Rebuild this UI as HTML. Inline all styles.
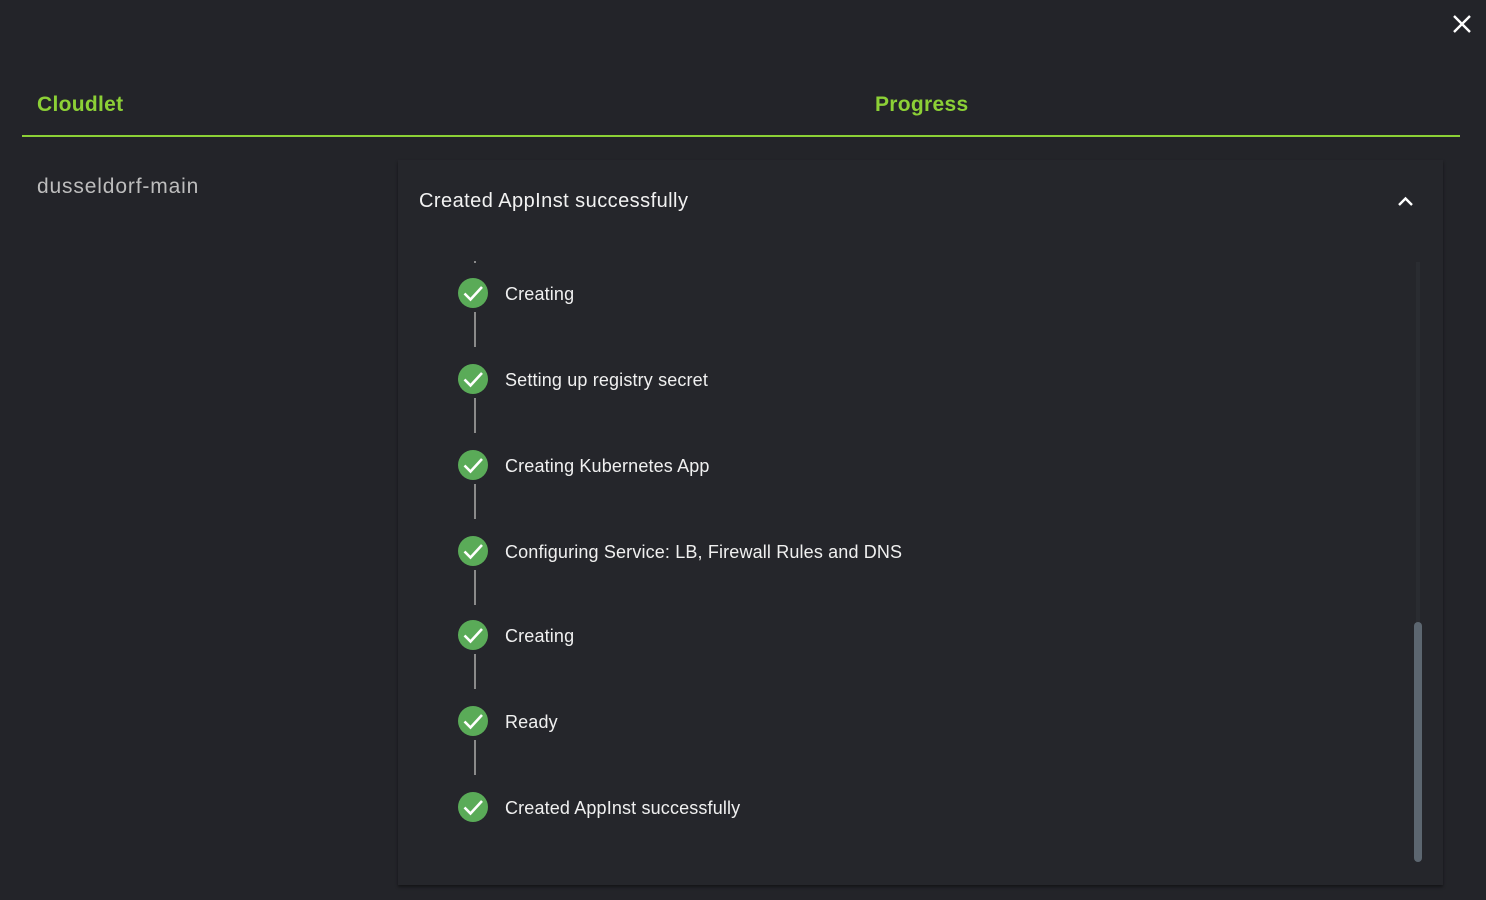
<!DOCTYPE html>
<html><head><style>
html,body{margin:0;padding:0;width:1486px;height:900px;overflow:hidden;background:#232429;font-family:"Liberation Sans",sans-serif;}
.abs{position:absolute}
.h{color:#8cd036;font-size:21px;font-weight:bold;top:93px;letter-spacing:0.3px}
.step{position:absolute;left:458px;width:30px;height:30px;border-radius:50%;background:#5aab58}
.step svg{position:absolute;left:0;top:0}
.lbl{position:absolute;left:505px;color:#f0f0f0;font-size:18px;line-height:20px;letter-spacing:0.15px}
.con{position:absolute;left:474px;width:2px;background:#8a8a8a}
</style></head><body>
<svg class="abs" style="left:1452px;top:14px" width="20" height="20" viewBox="0 0 20 20"><path d="M2 2L18 18M18 2L2 18" stroke="#fff" stroke-width="2.4"/></svg>
<div class="abs h" style="left:37px">Cloudlet</div>
<div class="abs h" style="left:875px">Progress</div>
<div class="abs" style="left:22px;top:135px;width:1438px;height:2px;background:#8cd036"></div>
<div class="abs" style="left:37px;top:175px;color:#bdbdbd;font-size:21px;letter-spacing:0.85px">dusseldorf-main</div>
<div class="abs" style="left:398px;top:160px;width:1045px;height:725px;background:#25262b;box-shadow:0 2px 3px rgba(0,0,0,.45)"></div>
<div class="abs" style="left:419px;top:190px;color:#f2f2f2;font-size:20px;letter-spacing:0.45px">Created AppInst successfully</div>
<svg class="abs" style="left:1397px;top:194px" width="17" height="14" viewBox="0 0 17 14"><path d="M2 11L8.5 4.5L15 11" stroke="#fff" stroke-width="2.4" fill="none"/></svg>
<div class="abs" style="left:1416px;top:262px;width:4px;height:598px;background:#2a2c31"></div>
<div class="abs" style="left:1414px;top:622px;width:8px;height:240px;border-radius:4px;background:#5c6670"></div>
<div class="con" style="top:261px;height:2px"></div>
<div class="con" style="top:312px;height:35px"></div>
<div class="con" style="top:398px;height:35px"></div>
<div class="con" style="top:484px;height:35px"></div>
<div class="con" style="top:570px;height:35px"></div>
<div class="con" style="top:654px;height:35px"></div>
<div class="con" style="top:740px;height:35px"></div>
<div class="step" style="top:278px"><svg width="30" height="30"><path d="M6.5 15.5l6 6L24 9" stroke="#fff" stroke-width="2.6" fill="none"/></svg></div>
<div class="lbl" style="top:284px">Creating</div>
<div class="step" style="top:364px"><svg width="30" height="30"><path d="M6.5 15.5l6 6L24 9" stroke="#fff" stroke-width="2.6" fill="none"/></svg></div>
<div class="lbl" style="top:370px">Setting up registry secret</div>
<div class="step" style="top:450px"><svg width="30" height="30"><path d="M6.5 15.5l6 6L24 9" stroke="#fff" stroke-width="2.6" fill="none"/></svg></div>
<div class="lbl" style="top:456px">Creating Kubernetes App</div>
<div class="step" style="top:536px"><svg width="30" height="30"><path d="M6.5 15.5l6 6L24 9" stroke="#fff" stroke-width="2.6" fill="none"/></svg></div>
<div class="lbl" style="top:542px">Configuring Service: LB, Firewall Rules and DNS</div>
<div class="step" style="top:620px"><svg width="30" height="30"><path d="M6.5 15.5l6 6L24 9" stroke="#fff" stroke-width="2.6" fill="none"/></svg></div>
<div class="lbl" style="top:626px">Creating</div>
<div class="step" style="top:706px"><svg width="30" height="30"><path d="M6.5 15.5l6 6L24 9" stroke="#fff" stroke-width="2.6" fill="none"/></svg></div>
<div class="lbl" style="top:712px">Ready</div>
<div class="step" style="top:792px"><svg width="30" height="30"><path d="M6.5 15.5l6 6L24 9" stroke="#fff" stroke-width="2.6" fill="none"/></svg></div>
<div class="lbl" style="top:798px">Created AppInst successfully</div>
</body></html>
